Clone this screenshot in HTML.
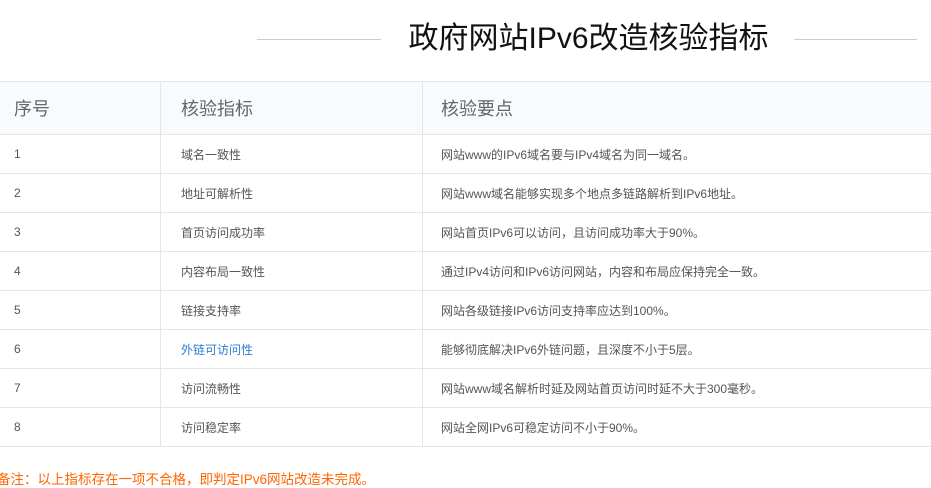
<!DOCTYPE html>
<html><head><meta charset="utf-8"><style>
body{margin:0;width:931px;height:488px;overflow:hidden;background:#fff;font-family:"Liberation Sans","Noto Sans CJK SC",sans-serif;position:relative}
.t{position:absolute;left:0;width:931px;top:18px;text-align:center;font-size:30px;color:#111;line-height:42px;padding-left:246px;box-sizing:border-box}
.l{position:absolute;top:39px;height:1px;background:#ccc}
table{position:absolute;top:81px;left:-1px;border-collapse:collapse;width:960px}
td{border:1px solid #e6e6e6;font-size:12px;color:#555;height:38px;padding:0}
tr.h td{height:52px;background:#f7fbfd;font-size:18px;color:#666}
td:nth-child(1){width:161px;padding-left:14px;box-sizing:border-box}
td:nth-child(2){width:262px;padding-left:20px;box-sizing:border-box}
td:nth-child(3){padding-left:18px}
.n{position:absolute;left:-3px;top:468px;font-size:13.5px;color:#f60}
</style></head><body>
<div class="l" style="left:257px;width:124px"></div>
<div class="l" style="left:794px;width:123px"></div>
<div class="t">政府网站IPv6改造核验指标</div>
<table>
<tr class="h"><td>序号</td><td>核验指标</td><td>核验要点</td></tr>
<tr><td>1</td><td>域名一致性</td><td>网站www的IPv6域名要与IPv4域名为同一域名。</td></tr>
<tr><td>2</td><td>地址可解析性</td><td>网站www域名能够实现多个地点多链路解析到IPv6地址。</td></tr>
<tr><td>3</td><td>首页访问成功率</td><td>网站首页IPv6可以访问，且访问成功率大于90%。</td></tr>
<tr><td>4</td><td>内容布局一致性</td><td>通过IPv4访问和IPv6访问网站，内容和布局应保持完全一致。</td></tr>
<tr><td>5</td><td>链接支持率</td><td>网站各级链接IPv6访问支持率应达到100%。</td></tr>
<tr><td>6</td><td style="color:#2a7fd4">外链可访问性</td><td>能够彻底解决IPv6外链问题，且深度不小于5层。</td></tr>
<tr><td>7</td><td>访问流畅性</td><td>网站www域名解析时延及网站首页访问时延不大于300毫秒。</td></tr>
<tr><td>8</td><td>访问稳定率</td><td>网站全网IPv6可稳定访问不小于90%。</td></tr>
</table>
<div class="n">备注：以上指标存在一项不合格，即判定IPv6网站改造未完成。</div>
</body></html>
